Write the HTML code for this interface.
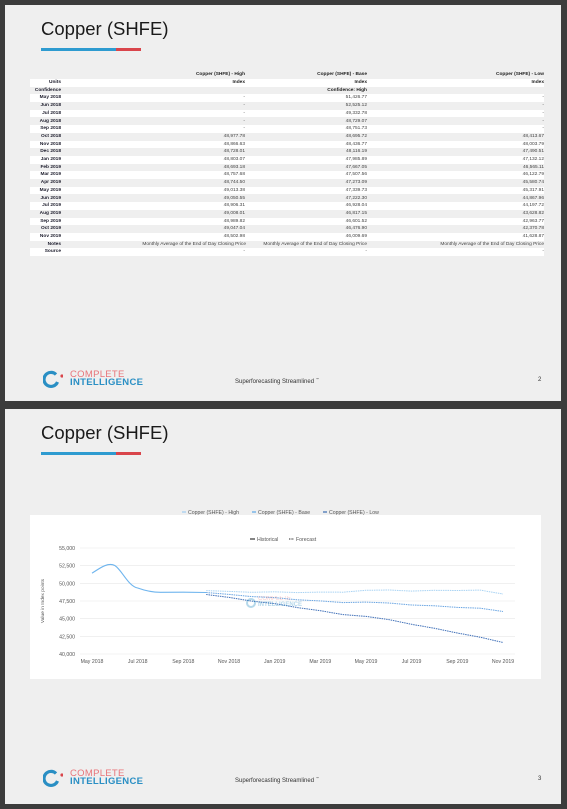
<!DOCTYPE html>
<html><head><meta charset="utf-8"><style>
*{margin:0;padding:0;box-sizing:border-box}
body{width:567px;height:809px;background:#3c3c3c;position:relative;overflow:hidden;font-family:"Liberation Sans",sans-serif}
.page{position:absolute;left:5px;width:556px;background:#efefef}
.abs{position:absolute}
.title{position:absolute;left:36px;top:13px;font-size:18.5px;color:#1a1a1a;font-family:"Liberation Sans",sans-serif}
.ub{position:absolute;height:3px;background:#2e9bd0}
.ur{position:absolute;height:3px;background:#d9454b}
.row{position:absolute;left:25px;width:514px;height:7.7px;font-size:4.8px;line-height:7.7px;color:#444}
.row.w{background:#fff}
.row span{position:absolute;text-align:right;white-space:nowrap}
.l{left:0;width:31px;font-weight:bold;color:#1a1a2a}
.c1{right:299px}.c2{right:177px}.c3{right:0}
.foot{position:absolute;font-size:6px;color:#333}
</style></head><body>

<div class="page" style="top:5px;height:396px">
<div class="title">Copper (SHFE)</div>
<div class="ub" style="left:36px;top:43px;width:76px"></div>
<div class="ur" style="left:111px;top:43px;width:25px"></div>

<div class="row" style="top:66px;color:#222;font-weight:bold"><span class="c1">Copper (SHFE) - High</span><span class="c2">Copper (SHFE) - Base</span><span class="c3">Copper (SHFE) - Low</span></div>
<div class="row w" style="top:74px"><span class="l">Units</span><span class="c1" style="font-weight:bold;color:#222">Index</span><span class="c2" style="font-weight:bold;color:#222">Index</span><span class="c3" style="font-weight:bold;color:#222">Index</span></div>
<div class="row" style="top:81.7px"><span class="l">Confidence</span><span class="c2" style="font-weight:bold;color:#222">Confidence: High</span></div>
<div class="row w" style="top:89.4px"><span class="l">May 2018</span><span class="c1">-</span><span class="c2">51,426.77</span><span class="c3">-</span></div>
<div class="row" style="top:97.1px"><span class="l">Jun 2018</span><span class="c1">-</span><span class="c2">52,525.12</span><span class="c3">-</span></div>
<div class="row w" style="top:104.8px"><span class="l">Jul 2018</span><span class="c1">-</span><span class="c2">49,332.78</span><span class="c3">-</span></div>
<div class="row" style="top:112.5px"><span class="l">Aug 2018</span><span class="c1">-</span><span class="c2">48,729.07</span><span class="c3">-</span></div>
<div class="row w" style="top:120.2px"><span class="l">Sep 2018</span><span class="c1">-</span><span class="c2">48,751.73</span><span class="c3">-</span></div>
<div class="row" style="top:127.9px"><span class="l">Oct 2018</span><span class="c1">48,977.78</span><span class="c2">48,695.72</span><span class="c3">48,413.67</span></div>
<div class="row w" style="top:135.6px"><span class="l">Nov 2018</span><span class="c1">48,866.63</span><span class="c2">48,436.77</span><span class="c3">48,003.79</span></div>
<div class="row" style="top:143.3px"><span class="l">Dec 2018</span><span class="c1">48,728.01</span><span class="c2">48,116.19</span><span class="c3">47,490.51</span></div>
<div class="row w" style="top:151px"><span class="l">Jan 2019</span><span class="c1">48,803.07</span><span class="c2">47,985.89</span><span class="c3">47,132.12</span></div>
<div class="row" style="top:158.7px"><span class="l">Feb 2019</span><span class="c1">48,693.18</span><span class="c2">47,667.05</span><span class="c3">46,565.11</span></div>
<div class="row w" style="top:166.4px"><span class="l">Mar 2019</span><span class="c1">48,757.68</span><span class="c2">47,507.56</span><span class="c3">46,122.79</span></div>
<div class="row" style="top:174.1px"><span class="l">Apr 2019</span><span class="c1">48,744.50</span><span class="c2">47,273.09</span><span class="c3">45,580.74</span></div>
<div class="row w" style="top:181.8px"><span class="l">May 2019</span><span class="c1">49,013.38</span><span class="c2">47,339.73</span><span class="c3">45,317.91</span></div>
<div class="row" style="top:189.5px"><span class="l">Jun 2019</span><span class="c1">49,050.55</span><span class="c2">47,222.30</span><span class="c3">44,867.96</span></div>
<div class="row w" style="top:197.2px"><span class="l">Jul 2019</span><span class="c1">48,906.31</span><span class="c2">46,928.04</span><span class="c3">44,197.72</span></div>
<div class="row" style="top:204.9px"><span class="l">Aug 2019</span><span class="c1">49,008.01</span><span class="c2">46,817.15</span><span class="c3">43,628.82</span></div>
<div class="row w" style="top:212.6px"><span class="l">Sep 2019</span><span class="c1">48,989.82</span><span class="c2">46,601.52</span><span class="c3">42,963.77</span></div>
<div class="row" style="top:220.3px"><span class="l">Oct 2019</span><span class="c1">49,047.04</span><span class="c2">46,476.90</span><span class="c3">42,370.78</span></div>
<div class="row w" style="top:228px"><span class="l">Nov 2019</span><span class="c1">48,502.98</span><span class="c2">46,009.69</span><span class="c3">41,628.87</span></div>
<div class="row" style="top:235.7px"><span class="l">Notes</span><span class="c1" style="right:298px">Monthly Average of the End of Day Closing Price</span><span class="c2">Monthly Average of the End of Day Closing Price</span><span class="c3">Monthly Average of the End of Day Closing Price</span></div>
<div class="row w" style="top:243.4px"><span class="l">Source</span><span class="c1">-</span><span class="c2">-</span><span class="c3">-</span></div>

<svg class="abs" style="left:38px;top:365px" width="20" height="19" viewBox="0 0 20 19"><path d="M13 4.5 A7 7 0 1 0 14.5 12" fill="none" stroke="#2a8fc4" stroke-width="3.2"/><circle cx="19" cy="6" r="1.6" fill="#d9454b"/></svg>
<div class="abs" style="left:65px;top:364px;font-size:9.5px;color:#e8757a;letter-spacing:.3px">COMPLETE</div>
<div class="abs" style="left:65px;top:372px;font-size:9.5px;color:#2a8fc4;font-weight:bold;letter-spacing:.3px">INTELLIGENCE</div>
<div class="foot" style="left:230px;top:372px">Superforecasting Streamlined <sup style="font-size:3px">™</sup></div>
<div class="foot" style="left:533px;top:372px">2</div>
</div>

<div class="page" style="top:409px;height:395px">
<div class="title">Copper (SHFE)</div>
<div class="ub" style="left:36px;top:43px;width:76px"></div>
<div class="ur" style="left:111px;top:43px;width:25px"></div>
</div>

<svg class="abs" style="left:0;top:0" width="567" height="809">
<rect x="30" y="515" width="511" height="164" fill="#fff"/>
<g font-family="Liberation Sans,sans-serif" font-size="5.2" fill="#555">
<line x1="182" y1="512" x2="186" y2="512" stroke="#9fcdf0" stroke-width="1.2"/><text x="188" y="514">Copper (SHFE) - High</text>
<line x1="252" y1="512" x2="256" y2="512" stroke="#5aa6e6" stroke-width="1.2"/><text x="258" y="514">Copper (SHFE) - Base</text>
<line x1="323" y1="512" x2="327" y2="512" stroke="#3a6cb0" stroke-width="1.2"/><text x="329" y="514">Copper (SHFE) - Low</text>
<line x1="250" y1="539" x2="255" y2="539" stroke="#333" stroke-width="1.2"/><text x="257" y="541">Historical</text>
<line x1="289" y1="539" x2="294" y2="539" stroke="#555" stroke-width="1.2" stroke-dasharray="1 .6"/><text x="296" y="541">Forecast</text>
<g stroke="#e8e8e8" stroke-width=".6">
<line x1="80" x2="515" y1="548" y2="548"/><line x1="80" x2="515" y1="565.7" y2="565.7"/><line x1="80" x2="515" y1="583.3" y2="583.3"/><line x1="80" x2="515" y1="601" y2="601"/><line x1="80" x2="515" y1="618.7" y2="618.7"/><line x1="80" x2="515" y1="636.3" y2="636.3"/><line x1="80" x2="515" y1="654" y2="654"/></g>
<g text-anchor="end"><text x="75" y="550">55,000</text><text x="75" y="567.7">52,500</text><text x="75" y="585.3">50,000</text><text x="75" y="603">47,500</text><text x="75" y="620.7">45,000</text><text x="75" y="638.3">42,500</text><text x="75" y="656">40,000</text></g>
<text transform="translate(44,601) rotate(-90)" text-anchor="middle" font-size="4.8">Value in Index points</text>
<g text-anchor="middle"><text x="92" y="663">May 2018</text><text x="137.7" y="663">Jul 2018</text><text x="183.3" y="663">Sep 2018</text><text x="229" y="663">Nov 2018</text><text x="274.7" y="663">Jan 2019</text><text x="320.3" y="663">Mar 2019</text><text x="366" y="663">May 2019</text><text x="411.6" y="663">Jul 2019</text><text x="457.3" y="663">Sep 2019</text><text x="503" y="663">Nov 2019</text></g>
</g>
<path d="M92 573.2 C100 568 108 562 114.8 565.5 C122 570 128 586 137.7 588 C146 591 152 592.3 160.5 592.3 L183.3 592.2 L206.2 592.5" fill="none" stroke="#6fb5ee" stroke-width="1.1"/>
<polyline fill="none" stroke="#a9d3f3" stroke-width="1" stroke-dasharray="1.5 .8" points="206.2,590.6 229,591.4 251.8,592.3 274.7,591.8 297.5,592.6 320.3,592.1 343.1,592.2 366,590.3 388.8,590 411.6,591.1 434.5,590.3 457.3,590.5 480.1,590.1 503,594"/>
<polyline fill="none" stroke="#6aa5e2" stroke-width="1" stroke-dasharray="1.5 .8" points="206.2,592.5 229,594.4 251.8,596.6 274.7,597.6 297.5,599.8 320.3,600.9 343.1,602.6 366,602.1 388.8,603 411.6,605 434.5,605.8 457.3,607.4 480.1,608.2 503,611.5"/>
<polyline fill="none" stroke="#4070b8" stroke-width="1" stroke-dasharray="1.5 .8" points="206.2,594.5 229,597.4 251.8,601.1 274.7,603.6 297.5,607.6 320.3,610.7 343.1,614.6 366,616.4 388.8,619.6 411.6,624.3 434.5,628.3 457.3,633 480.1,637.2 503,642.5"/>
<g opacity=".35"><circle cx="251" cy="603" r="4" fill="none" stroke="#2a8fc4" stroke-width="2"/><text x="258" y="600" font-size="6" fill="#e8757a" font-family="Liberation Sans,sans-serif">COMPLETE</text><text x="258" y="606" font-size="6" fill="#2a8fc4" font-weight="bold" font-family="Liberation Sans,sans-serif">INTELLIGENCE</text></g>
</svg>

<svg class="abs" style="left:43px;top:769px" width="20" height="19" viewBox="0 0 20 19"><path d="M13 4.5 A7 7 0 1 0 14.5 12" fill="none" stroke="#2a8fc4" stroke-width="3.2"/><circle cx="19" cy="6" r="1.6" fill="#d9454b"/></svg>
<div class="abs" style="left:70px;top:768px;font-size:9.5px;color:#e8757a;letter-spacing:.3px">COMPLETE</div>
<div class="abs" style="left:70px;top:776px;font-size:9.5px;color:#2a8fc4;font-weight:bold;letter-spacing:.3px">INTELLIGENCE</div>
<div class="foot" style="left:235px;top:776px">Superforecasting Streamlined <sup style="font-size:3px">™</sup></div>
<div class="foot" style="left:538px;top:776px">3</div>
</body></html>
